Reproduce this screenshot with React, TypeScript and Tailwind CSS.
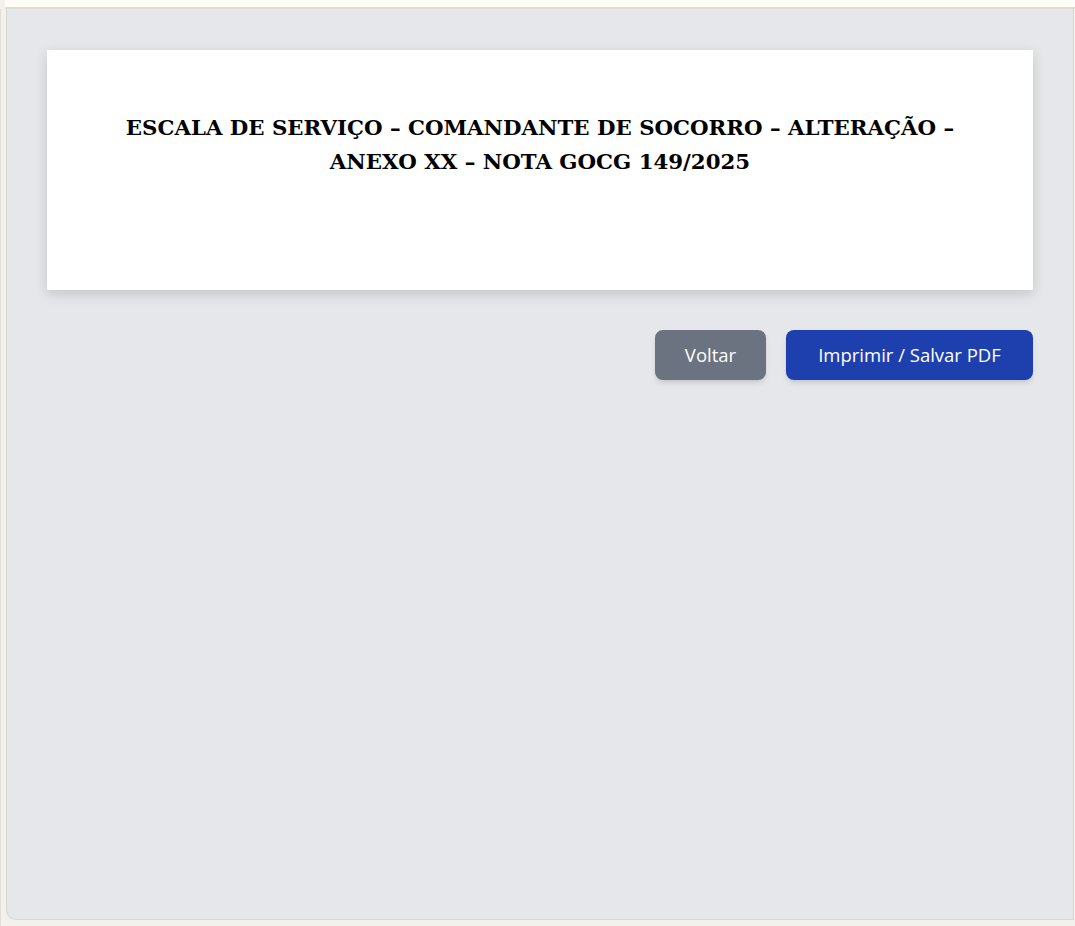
export default function App() {
  return (
    <div className="w-[1075px] h-[926px] bg-[#f2f1ec] flex flex-col overflow-hidden">
      <div className="h-[9px] bg-[#fdfcf7] border-b-2 border-[#dedbcf] ml-[5px] shrink-0" />
      <div className="flex-1 flex pl-[5px] pr-[1px] pb-[6px] border-l border-[#e0ded6]">
        <div className="flex-1 bg-[#e5e7eb] rounded-bl-[10px] border-b border-l border-r border-[#d6d8d2] px-[40px] pt-[41px] flex flex-col">
          <div className="bg-white h-[240px] shadow-[0_4px_12px_rgba(0,0,0,0.15)] pt-[61px] px-[60px]">
            <h1 className="text-center font-bold text-[21.3px] leading-[34px] text-black" style={{ fontFamily: '"DejaVu Serif", "Liberation Serif", serif' }}>
              ESCALA DE SERVIÇO – COMANDANTE DE SOCORRO – ALTERAÇÃO – ANEXO XX – NOTA GOCG 149/2025
            </h1>
          </div>
          <div className="flex justify-end gap-[20px] mt-[40px]" style={{ fontFamily: '"Open Sans", "Noto Sans", sans-serif' }}>
            <button className="h-[50px] w-[111px] rounded-lg bg-[#6b7280] text-white text-[18.5px] shadow-md">Voltar</button>
            <button className="h-[50px] w-[247px] rounded-lg bg-[#1e40af] text-white text-[18.5px] shadow-md">Imprimir / Salvar PDF</button>
          </div>
        </div>
      </div>
    </div>
  );
}
